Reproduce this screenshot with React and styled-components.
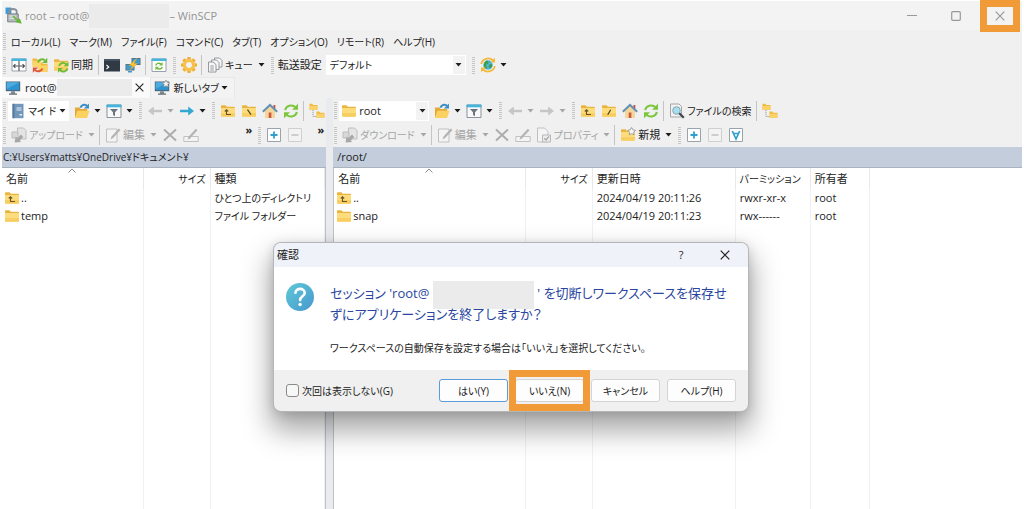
import React from "react";
import styled, { createGlobalStyle, css } from "styled-components";

const GlobalStyle = createGlobalStyle`
  *, *::before, *::after {
    box-sizing: border-box;
  }
  body {
    margin: 0;
    background: #fff;
  }
  body, button, select, input {
    font-family: "Open Sans", "Noto Sans CJK JP", sans-serif;
    font-size: 11px;
    line-height: 16px;
    font-feature-settings: "palt";
    color: #222;
  }
`;

/* ---------- window ---------- */

const Window = styled.div`
  display: flex;
  flex-direction: column;
  min-height: 100vh;
  padding: 1px 2px 0;
  overflow: hidden;
  position: relative;
`;

const TitleBar = styled.header`
  display: flex;
  align-items: center;
  height: 29px;
  padding-left: 3px;
  background: #f3f3f3;
  color: #949494;
`;

const TitleText = styled.h1`
  display: flex;
  align-items: center;
  flex: 1;
  margin: 0 0 0 3px;
  font-size: 11px;
  font-weight: 400;
`;

const Redacted = styled.span`
  display: inline-block;
  width: ${(p) => p.$width}px;
  height: ${(p) => p.$height}px;
  background: #ebebeb;
`;

const WindowButton = styled.button`
  position: relative;
  display: flex;
  align-items: center;
  justify-content: center;
  width: 44px;
  height: 29px;
  padding: 0;
  border: 0;
  background: none;
  color: #999;
`;

const Highlight = styled.span`
  position: absolute;
  inset: ${(p) => p.$inset};
  border: 7px solid #f09a38;
  pointer-events: none;
`;

const MenuBar = styled.nav`
  display: flex;
  align-items: center;
  gap: 9px;
  height: 23px;
  background: #f0f0f0;
`;

const MenuItem = styled.button`
  padding: 0;
  border: 0;
  background: none;
  font-size: 10px;
  white-space: nowrap;
`;

/* ---------- toolbars ---------- */

const Toolbar = styled.div`
  display: flex;
  align-items: center;
  height: ${(p) => p.$height || 24}px;
  background: #f0f0f0;
  white-space: nowrap;
`;

const Grip = styled.span`
  flex: none;
  width: 3px;
  height: 17px;
  margin: ${(p) => (p.$lead ? "0 2px 0 1px" : "0 2px 0 4px")};
  background: repeating-linear-gradient(#c6c6c6 0 1px, #f0f0f0 1px 2px);
  ${MenuBar} & {
    margin: 0 -4px 0 1px;
  }
`;

const Separator = styled.span`
  flex: none;
  width: 1px;
  height: 20px;
  margin: 0 2px;
  background: #c4c4c4;
`;

const ToolButton = styled.button`
  display: flex;
  align-items: center;
  flex: none;
  height: 22px;
  padding: 0 ${(p) => (p.$label ? 3 : 2)}px 0 3px;
  gap: 2px;
  border: 0;
  background: none;
  font-size: ${(p) => (p.$kana ? 10 : 11)}px;
  color: ${(p) => (p.disabled ? "#a5a5a5" : "#222")};
`;

const CaretButton = styled.button`
  display: flex;
  align-items: center;
  justify-content: center;
  flex: none;
  width: 11px;
  height: 22px;
  padding: 0;
  border: 0;
  background: none;
  color: ${(p) => (p.disabled ? "#a5a5a5" : "#1a1a1a")};
`;

const More = styled.button`
  align-self: flex-start;
  padding: 0 2px;
  border: 0;
  background: none;
  font-weight: 700;
  line-height: 14px;
`;

const Spacer = styled.span`
  flex: ${(p) => (p.$width ? `0 0 ${p.$width}px` : 1)};
`;

const Combo = styled.span`
  display: flex;
  align-items: center;
  flex: none;
  position: relative;
  width: ${(p) => p.$width}px;
  height: 20px;
  padding-left: 2px;
  margin-right: 2px;
  background: #fff;
`;

const ComboSelect = styled.select`
  appearance: none;
  flex: 1;
  min-width: 0;
  height: 20px;
  padding: 0 0 0 2px;
  border: 0;
  background: none;
  font-size: ${(p) => (p.$kana ? 10 : 11)}px;
`;

const ComboArrow = styled.span`
  display: flex;
  align-items: center;
  justify-content: center;
  width: 12px;
  height: 18px;
  margin-right: 1px;
  background: ${(p) => (p.$flat ? "#fff" : "#f3f3f3")};
  pointer-events: none;
`;

const FieldLabel = styled.label`
  padding: 0 4px 0 2px;
`;

/* ---------- session tabs ---------- */

const Tabs = styled.div`
  display: flex;
  height: 21px;
  background: #f0f0f0;
`;

const Tab = styled.div`
  display: flex;
  align-items: center;
  padding: 0 4px 0 3px;
  ${(p) =>
    p.$active
      ? css`
          background: #fafafa;
        `
      : css`
          background: #f3f3f3;
          border: 1px solid #e8e8e8;
          border-bottom: 0;
        `}
`;

const TabButton = styled.button`
  display: flex;
  align-items: center;
  gap: 4px;
  padding: 0;
  border: 0;
  background: none;
  font-size: ${(p) => (p.$kana ? 10 : 11)}px;
  white-space: nowrap;
`;

const TabClose = styled(TabButton)`
  margin: 0 2px 0 3px;
`;

/* ---------- panes ---------- */

const Panes = styled.main`
  display: grid;
  grid-template-columns: minmax(0, 32fr) minmax(0, 68fr);
  column-gap: 7px;
  flex: 1;
  background: #e9ebee;
`;

const Pane = styled.section`
  display: flex;
  flex-direction: column;
`;

const PathBar = styled.div`
  height: 21px;
  padding: 1px ${(p) => p.$indent}px;
  border-bottom: 1px solid #a9b3c0;
  background: #c3cddc;
  font-size: ${(p) => (p.$kana ? 10 : 11)}px;
  line-height: 18px;
`;

const Listing = styled.div`
  display: flex;
  flex: 1;
  border: solid #bfc3c9;
  border-width: ${(p) => (p.$remote ? "0 0 0 1px" : "0 1px 0 0")};
  background: #fff;
`;

const FileTable = styled.table`
  width: 100%;
  table-layout: fixed;
  border-collapse: collapse;
  white-space: nowrap;
`;

const Col = styled.col`
  width: ${(p) => p.$width}px;
`;

const Th = styled.th`
  position: relative;
  height: 21px;
  padding: 0 4px;
  border-right: 1px solid #e8e8e8;
  font-size: ${(p) => (p.$kana ? 10 : 11)}px;
  font-weight: 400;
  text-align: ${(p) => (p.$right ? "right" : "left")};
  &:last-child {
    border-right: 0;
  }
`;

const Td = styled.td`
  height: 18px;
  padding: 0 4px;
  border-right: 1px solid #eef2f8;
  font-size: ${(p) => (p.$kana ? 10 : 11)}px;
  &:first-child {
    padding-left: 2px;
  }
  &:last-child {
    border-right: 0;
  }
`;

const FillRow = styled.tr`
  height: 100%;
`;

const FileName = styled.span`
  display: flex;
  align-items: center;
  gap: 1px;
`;

const SortMark = styled.svg`
  position: absolute;
  top: 0;
  left: 50%;
  transform: translateX(-50%);
`;

/* ---------- dialog ---------- */

const Dialog = styled.section`
  position: absolute;
  top: 243px;
  left: 50%;
  width: 474px;
  margin-left: -238px;
  border-radius: 7px;
  background: #f0f0f0;
  box-shadow: 0 0 0 1px #b4b6ba, 0 16px 28px 4px rgba(0, 0, 0, 0.34),
    0 2px 12px rgba(0, 0, 0, 0.16);
`;

const DialogTitle = styled.header`
  display: flex;
  align-items: center;
  height: 24px;
  padding: 0 8px 0 3px;
  border-radius: 7px 7px 0 0;
  background: #eff2f8;
`;

const DialogName = styled.h2`
  flex: 1;
  margin: 0;
  font-size: 11px;
  font-weight: 400;
`;

const DialogTool = styled.button`
  display: flex;
  align-items: center;
  justify-content: center;
  width: 30px;
  height: 24px;
  margin-left: 14px;
  padding: 0;
  border: 0;
  background: none;
`;

const DialogBody = styled.div`
  display: flex;
  gap: 16px;
  padding: 16px 12px 14px;
  background: #fff;
`;

const Question = styled.p`
  margin: 0 0 15px;
  font-size: 13px;
  line-height: 21px;
  color: #2a46a0;
  ${Redacted} {
    margin: -6px 3px -6px 4px;
    vertical-align: middle;
  }
`;

const Hint = styled.p`
  margin: 0;
  font-size: 10px;
`;

const DialogFooter = styled.footer`
  display: flex;
  align-items: center;
  gap: 7px;
  height: 41px;
  padding: 0 12px;
`;

const CheckLabel = styled.label`
  display: flex;
  align-items: center;
  gap: 3px;
  margin-right: auto;
  font-size: 10px;
  white-space: nowrap;
`;

const CheckBox = styled.input`
  appearance: none;
  flex: none;
  width: 13px;
  height: 13px;
  margin: 0;
  border: 1px solid #8a8a8a;
  border-radius: 3px;
  background: #f7f7f7;
`;

const DialogButton = styled.button`
  position: relative;
  width: 69px;
  height: 23px;
  padding: 0;
  border: 1px solid ${(p) => (p.$primary ? "#5a9bd8" : "#d4d4d4")};
  border-radius: 3px;
  background: #fdfdfd;
  font-size: 10px;
  white-space: nowrap;
`;

/* ---------- icons ---------- */

const Svg = ({ children, size = 16, ...rest }) => (
  <svg width={size} height={size} viewBox="0 0 16 16" fill="none" aria-hidden="true" {...rest}>
    {children}
  </svg>
);

const Caret = () => (
  <svg width="7" height="4" viewBox="0 0 7 4" aria-hidden="true">
    <path d="M0.5 0h6L3.5 3.6z" fill="currentColor" />
  </svg>
);

const CloseGlyph = ({ size = 10 }) => (
  <svg width={size} height={size} viewBox="0 0 10 10" aria-hidden="true">
    <path d="M0.7 0.7l8.6 8.6M9.3 0.7L0.7 9.3" stroke="currentColor" strokeWidth="1.2" />
  </svg>
);

const folderShape = (
  <>
    <path d="M1 3.2c0-.6.3-.9.9-.9h3.6l1.4 1.5H14c.6 0 1 .3 1 .9v3H1z" fill="#eab53f" />
    <path d="M1 5h14v7.8c0 .6-.4.9-1 .9H2c-.6 0-1-.3-1-.9z" fill="#fcdc7c" />
    <path d="M1 10h14v2.8c0 .6-.4.9-1 .9H2c-.6 0-1-.3-1-.9z" fill="#f7ce62" />
  </>
);

const FolderIcon = () => <Svg>{folderShape}</Svg>;

const FolderUpIcon = () => (
  <Svg>
    {folderShape}
    <path d="M6.500 12V7M4.800 8.500l1.700-1.800 1.700 1.800M6.500 11.500H11" stroke="#6b5526" strokeWidth="1.100" />
  </Svg>
);

const FolderSlashIcon = ({ back }) => (
  <Svg>
    {folderShape}
    <path d={back ? "M6.5 6.7l3.5 5" : "M9.7 6.7l-3 5"} stroke="#54411c" strokeWidth="1.2" />
  </Svg>
);

const FolderOpenIcon = () => (
  <Svg>
    <path d="M1 4.5h4.3l1.3 1.4h6.6V14H1z" fill="#e5a936" />
    <path d="M3.4 7.8h12.1L13 15H1z" fill="#fbd160" />
    <path d="M6.500 4.800c.8-3 4-4 6.500-2" stroke="#3d8fc8" strokeWidth="2" />
    <path d="M15 .4v5.200H9.800z" fill="#3d8fc8" />
  </Svg>
);

const NewFolderIcon = () => (
  <Svg>
    {folderShape}
    <path
      d="M11.600 .5l1.300 2.300 2.600.5-1.800 1.900.3 2.600-2.400-1.100-2.400 1.100.3-2.600L7.700 3.300l2.600-.5z"
      fill="#f6f6f6"
      stroke="#8d8d8d"
      strokeWidth=".8"
    />
  </Svg>
);

const TreeIcon = () => (
  <Svg>
    <path d="M4 7v6.500h4" stroke="#9a9a9a" strokeDasharray="1.200 .8" />
    <path d="M.5 .8h2.800l.9 1.100h4.300v5.100H.5z" fill="#f2b93f" />
    <path d="M.5 3h8v4h-8z" fill="#f9d26c" />
    <path d="M7.500 8.600h2.800l.9 1.100h4.300v5.100h-8z" fill="#f2b93f" />
    <path d="M7.500 10.800h8v4h-8z" fill="#f9d26c" />
  </Svg>
);

const FilterIcon = () => (
  <Svg>
    <path d="M1 2h14v12.500H1z" fill="#f7f9fa" stroke="#8b9299" />
    <path d="M.5 1.500h15V4.300H.5z" fill="#45b5dc" />
    <path d="M4 6h8L9 9.300v4l-2-1.300V9.300z" fill="#6d747b" />
  </Svg>
);

const ArrowIcon = ({ left, color = "#c5c5c5" }) => (
  <Svg>
    <path
      d="M1 6.700h8.200V3.600L15 8l-5.800 4.400V9.300H1z"
      fill={color}
      transform={left ? "matrix(-1 0 0 1 16 0)" : undefined}
    />
  </Svg>
);

const HomeIcon = () => (
  <Svg>
    <path d="M3 7.500L8 3l5 4.500V15H3z" fill="#f3d79a" />
    <path d="M6.700 9.500h2.700V15H6.700z" fill="#d0573f" />
    <path d="M11.500 2h1.800v4h-1.800z" fill="#c9493a" />
    <path d="M.8 8.800L8 2l7.200 6.800" stroke="#6590b5" strokeWidth="2" />
  </Svg>
);

const RefreshIcon = ({ color = "#7cc63d" }) => (
  <Svg>
    <path d="M2.200 7.200C2.800 2.600 9 .8 12.600 4.200M13.800 8.800c-.6 4.600-6.800 6.400-10.400 3" stroke={color} strokeWidth="2" />
    <path d="M15 .8v5.900H9zM1 15.200V9.300H7z" fill={color} />
  </Svg>
);

const SyncBrowseIcon = () => (
  <Svg>
    <path d="M1 2h14v12H1z" fill="#fff" stroke="#9aa1a8" />
    <path d="M.5 1.500h15v2.500H.5z" fill="#45b5dc" />
    <path
      d="M8 4v10M2.500 9h4.800M8.700 9h4.800M4.400 7.100L2.500 9l1.900 1.900M11.600 7.100l1.900 1.900-1.900 1.900"
      stroke="#4b4f54"
      strokeWidth="1.100"
    />
  </Svg>
);

const FolderSyncIcon = () => (
  <Svg>
    {folderShape}
    <path d="M6 9c1-3.500 5-4 7.500-1.500" stroke="#6dbb38" strokeWidth="1.800" />
    <path d="M15.500 4.500v4.800h-4.800z" fill="#6dbb38" />
    <path d="M14.500 11.500c-1 3.500-5 4-7.500 1.500" stroke="#6dbb38" strokeWidth="1.800" />
    <path d="M5 15.800V11h4.800z" fill="#6dbb38" />
  </Svg>
);

const CompareIcon = () => (
  <Svg>
    <path d="M.5 1.500h4l1 1.300H9V8H.5z" fill="#f2b93f" />
    <path d="M6 5.500h4l1 1.300h4.500v8H6z" fill="#f2b93f" />
    <path d="M.5 4H9v6H.5zM6 8.500h9.500v6.300H6z" fill="#fbd568" />
    <path d="M6 5.500C7 2 10.500 1.500 12.800 3.300" stroke="#6dbb38" strokeWidth="2" />
    <path d="M15.300 .7v5.200h-5.200z" fill="#6dbb38" />
    <path d="M10.500 11.500c-1.200 3-4.800 3.500-7.200 1.700" stroke="#e2553b" strokeWidth="2" />
    <path d="M.8 15.800v-5.400h5.400z" fill="#e2553b" />
  </Svg>
);

const TerminalIcon = () => (
  <Svg>
    <path d="M0 2h16v12.500H0z" fill="#2f3a44" />
    <path d="M0 2h16v2H0z" fill="#47535f" />
    <path d="M2.500 8l2.200 2-2.200 2" stroke="#fff" strokeWidth="1.100" />
  </Svg>
);

const monitorShape = (
  <>
    <path d="M.8 1.500h14.400v9.700H.8z" fill="#4f5b66" />
    <path d="M1.600 2.300h12.800v8H1.600z" fill="#2f93cf" />
    <path d="M1.600 2.300h12.800L1.600 9z" fill="#4cacdf" />
    <path d="M6.300 11.200h3.400l.6 2.600H5.700z" fill="#7c868f" />
    <path d="M4 13.500h8v1.200H4z" fill="#59636c" />
  </>
);

const MonitorIcon = () => <Svg>{monitorShape}</Svg>;

const NewTabIcon = () => (
  <Svg>
    {monitorShape}
    <path
      d="M12 0l1.200 2.300 2.500.4-1.800 1.800.4 2.500L12 5.900 9.700 7l.4-2.500L8.300 2.700l2.500-.4z"
      fill="#f2f2f2"
      stroke="#858585"
      strokeWidth=".7"
    />
  </Svg>
);

const PuttyIcon = () => (
  <Svg>
    <path d="M6.500 1h9v7h-9z" fill="#5b6b78" />
    <path d="M7.300 1.800h7.400v5.400H7.300z" fill="#3d9bd4" />
    <path d="M.5 7h9v6.500h-9z" fill="#5b6b78" />
    <path d="M1.300 7.800h7.400v4.900H1.300zM3 14h4v1.500H3z" fill="#3d9bd4" />
    <path d="M12 1L4 8.500h3.500L5 13l7.500-6.500H9z" fill="#fbc52d" stroke="#d99a1c" strokeWidth=".4" />
  </Svg>
);

const RefreshPanelIcon = () => (
  <Svg>
    <path d="M1 2h14v12.500H1z" fill="#fff" stroke="#9aa1a8" />
    <path d="M.5 1.500h15v2.500H.5z" fill="#45b5dc" />
    <path
      d="M4.700 8.500c.5-2.300 3.500-3 5.500-1.300M11.300 9.800c-.5 2.300-3.500 3-5.500 1.300"
      stroke="#6dbb38"
      strokeWidth="1.400"
    />
    <path d="M11.600 5v3.500H8.100zM4.400 13.300V9.800h3.500z" fill="#6dbb38" />
  </Svg>
);

const GearIcon = () => (
  <Svg>
    <g fill="#efb036">
      {[0, 45, 90, 135].map((deg) => (
        <rect key={deg} x="6.200" y="0" width="3.600" height="16" rx="1" transform={`rotate(${deg} 8 8)`} />
      ))}
    </g>
    <circle cx="8" cy="8" r="4.600" stroke="#f7c14b" strokeWidth="3" />
    <circle cx="8" cy="8" r="3" fill="#f2f2f2" />
  </Svg>
);

const QueueIcon = () => (
  <Svg stroke="#8a8f94" fill="#f7f7f7" strokeWidth=".9">
    <path d="M7.500 1h5l2.500 2.500V10H7.500z" />
    <path d="M4.500 3h5L12 5.500V12.500H4.500z" />
    <path d="M1.500 5h4.500L9 7.500v7.500H1.500z" />
    <path d="M3.300 9h3.500M3.300 11h3.500M3.300 13h3.500" />
  </Svg>
);

const GlobeIcon = () => (
  <Svg>
    <circle cx="8" cy="8" r="4.700" fill="#4bb4dc" />
    <path
      d="M5 5c2-2 3-1 3.500 0s-1 2-2 2.500-.5 2 .5 2.500-1 2-1.500 1.500C3 10 3.500 7 5 5zM9.500 7.500c1.500-1 3-.5 2.800 1S10.500 12 9.500 11s-1-2.500 0-3.500z"
      fill="#3f9f46"
    />
    <path
      d="M1.300 7C2 2 9 -.5 13 3.500M14.700 9c-.7 5-7.700 7.500-11.700 3.500"
      stroke="#f2b93b"
      strokeWidth="1.800"
    />
    <path d="M15 .8v4.700h-4.700zM1 15.200v-4.700h4.700z" fill="#f2b93b" />
  </Svg>
);

const DocumentsIcon = () => (
  <Svg>
    <path d="M2.500 .8h11v14.400h-11z" fill="#7397bb" />
    <path d="M2.500 .8h2v14.400h-2z" fill="#557ba2" />
    <path d="M6.500 5h5M6.500 7h5" stroke="#e6eef6" />
    <path d="M9.500 11h2.500v1.500H9.500z" fill="#e6eef6" />
  </Svg>
);

const TransferIcon = () => (
  <Svg>
    <path d="M6.500 1h6l2.500 2.500V12H6.500z" fill="#e4e4e4" stroke="#bdbdbd" />
    <path d="M1 5h6v6H1z" fill="#d8d8d8" stroke="#bdbdbd" />
    <path d="M3.500 15.500l1.200-6 1.700 1.700L10 7.600l2.300 2.300-3.600 3.600 1.500 1.500z" fill="#a8a8a8" />
  </Svg>
);

const EditIcon = () => (
  <Svg>
    <path d="M1.500 2h10.500v13H1.500z" fill="#f4f4f4" stroke="#c0c0c0" />
    <path d="M5.500 12.500l1-3 7.300-8 1.700 1.500-7.300 8z" fill="#b4b4b4" />
  </Svg>
);

const RenameIcon = () => (
  <Svg>
    <path d="M.8 9.500h14.400v5H.8z" fill="#f4f4f4" stroke="#c0c0c0" />
    <path d="M4.500 12.700l1-3 7.300-8 1.700 1.500-7.300 8z" fill="#b4b4b4" />
  </Svg>
);

const DeleteIcon = () => (
  <Svg>
    <path d="M2 2.500l12 11M14 2.500l-12 11" stroke="#adadad" strokeWidth="2" />
  </Svg>
);

const PropertiesIcon = () => (
  <Svg>
    <path d="M1.500 1h7l3.500 3.500V15H1.500z" fill="#f4f4f4" stroke="#c0c0c0" />
    <path d="M6.500 8h8v7h-8z" fill="#ececec" stroke="#b8b8b8" />
    <path d="M8.300 11.300l1.700 1.700 3-3.600" stroke="#a8a8a8" strokeWidth="1.300" />
  </Svg>
);

const BoxIcon = ({ kind }) => (
  <Svg>
    <path
      d="M1.500 1.500h13v13h-13z"
      fill={kind === "minus" ? "#f3f3f3" : "#fff"}
      stroke={kind === "minus" ? "#cfcfcf" : "#9aa3ab"}
    />
    {kind === "plus" && <path d="M8 4.500v7M4.500 8h7" stroke="#2f9fd0" strokeWidth="1.800" />}
    {kind === "minus" && <path d="M4.500 8h7" stroke="#bdbdbd" strokeWidth="1.400" />}
    {kind === "select" && <path d="M4.300 4l3.700 8 3.700-8M5.500 6.500h5" stroke="#2f9fd0" strokeWidth="1.700" />}
  </Svg>
);

const FindIcon = () => (
  <Svg>
    <path d="M1.500 1h8.500l2.500 2.500V14H1.500z" fill="#f2f2f2" stroke="#a5a5a5" />
    <circle cx="7.500" cy="7.500" r="3.800" fill="#a5dff0" stroke="#8aa5b0" />
    <path d="M10.300 10.300l4.500 4.500" stroke="#3e464c" strokeWidth="2.200" />
  </Svg>
);

const AppIcon = () => (
  <Svg size={17}>
    <path d="M.5.500h5.500v6H.5z" fill="#3b9bd8" />
    <path d="M4 7V4.500C4 1 11 1 11 4.500V7" stroke="#8a9096" strokeWidth="1.700" />
    <path d="M2.500 6.500h10V14h-10z" fill="#b5babf" stroke="#70767c" strokeWidth=".8" />
    <path d="M4 8.500h6M4 10.500h6" stroke="#e8eaec" />
    <path d="M8 8l4.300 4.200L14 10.500l1.700 5.300-5.400-1.500 1-1L7 9z" fill="#63b832" />
  </Svg>
);

const QuestionIcon = () => (
  <svg width="28" height="28" viewBox="0 0 28 28" aria-hidden="true">
    <defs>
      <linearGradient id="ask" x1="0" y1="0" x2="1" y2="1">
        <stop offset="0" stopColor="#5fc9d6" />
        <stop offset="1" stopColor="#4797cf" />
      </linearGradient>
    </defs>
    <circle cx="14" cy="14" r="14" fill="url(#ask)" />
    <path
      d="M9.500 9.800c.2-5.200 9.200-5.200 9.200.1 0 3.500-4.600 3.400-4.600 7.200"
      fill="none"
      stroke="#fff"
      strokeWidth="2.600"
      strokeLinecap="round"
    />
    <circle cx="14.100" cy="21.500" r="1.700" fill="#fff" />
  </svg>
);

/* ---------- parts ---------- */

const Tool = ({ icon, label, kana, disabled, name }) => (
  <ToolButton
    type="button"
    disabled={disabled}
    $label={!!label}
    $kana={kana}
    aria-label={label ? undefined : name}
  >
    {icon}
    {label}
  </ToolButton>
);

const Split = ({ disabled, name, ...rest }) => (
  <>
    <Tool disabled={disabled} name={name} {...rest} />
    <CaretButton type="button" disabled={disabled} aria-label={name}>
      <Caret />
    </CaretButton>
  </>
);

const Dropdown = ({ id, name, icon, width, value, flat, kana }) => (
  <Combo $width={width}>
    {icon}
    <ComboSelect id={id} aria-label={name} defaultValue={value} $kana={kana}>
      <option>{value}</option>
    </ComboSelect>
    <ComboArrow $flat={flat}>
      <Caret />
    </ComboArrow>
  </Combo>
);

const NavigationBar = ({ remote }) => (
  <Toolbar $height={25}>
    <Grip $lead />
    {remote ? (
      <Dropdown name="Remote folder" icon={<FolderIcon />} width={90} value="root" />
    ) : (
      <Dropdown name="Local folder" icon={<DocumentsIcon />} width={61} value="マイ ド" flat kana />
    )}
    <Split icon={<FolderOpenIcon />} name="Open" />
    <Split icon={<FilterIcon />} name="Filter" />
    <Grip />
    <Split icon={<ArrowIcon left />} name="Back" disabled />
    <Split icon={<ArrowIcon color={remote ? undefined : "#35a7d3"} />} name="Forward" disabled={remote} />
    <Grip />
    <Tool icon={<FolderUpIcon />} name="Parent" />
    <Tool icon={<FolderSlashIcon back={!remote} />} name="Root" />
    <Tool icon={<HomeIcon />} name="Home" />
    <Tool icon={<RefreshIcon />} name="Refresh" />
    <Separator />
    {remote && (
      <>
        <Tool icon={<FindIcon />} label="ファイルの検索" kana />
        <Separator />
      </>
    )}
    <Tool icon={<TreeIcon />} name="Tree" />
  </Toolbar>
);

const ActionBar = ({ remote }) => (
  <Toolbar $height={24}>
    <Grip $lead />
    <Split
      icon={<TransferIcon />}
      label={remote ? "ダウンロード" : "アップロード"}
      name="Transfer"
      kana
      disabled
    />
    <Separator />
    <Split icon={<EditIcon />} label="編集" name="Edit" disabled />
    <Tool icon={<DeleteIcon />} name="Delete" disabled />
    <Tool icon={<RenameIcon />} name="Rename" disabled />
    {remote ? (
      <>
        <Split icon={<PropertiesIcon />} label="プロパティ" name="Properties" kana disabled />
        <Separator />
        <Split icon={<NewFolderIcon />} label="新規" name="New" />
      </>
    ) : (
      <>
        <Spacer />
        <More type="button">»</More>
      </>
    )}
    <Grip />
    <Tool icon={<BoxIcon kind="plus" />} name="Select" />
    <Tool icon={<BoxIcon kind="minus" />} name="Unselect" disabled />
    {remote ? (
      <Tool icon={<BoxIcon kind="select" />} name="Select all" />
    ) : (
      <>
        <Spacer $width={10} />
        <More type="button">»</More>
      </>
    )}
  </Toolbar>
);

const FileList = ({ columns, rows, remote }) => (
  <Listing $remote={remote}>
    <FileTable>
      <colgroup>
        {columns.map((col) => (
          <Col key={col.title} $width={col.width} />
        ))}
        <col />
      </colgroup>
      <thead>
        <tr>
          {columns.map((col, idx) => (
            <Th key={col.title} $right={col.right} $kana={col.kana}>
              {idx === 0 && (
                <SortMark width="8" height="5" viewBox="0 0 8 5" fill="none" stroke="#8a8a8a">
                  <path d="M.5 4.500L4 1l3.500 3.500" />
                </SortMark>
              )}
              {col.title}
            </Th>
          ))}
          <Th as="td" />
        </tr>
      </thead>
      <tbody>
        {rows.map((row) => (
          <tr key={row[0]}>
            {row.map((cell, idx) => (
              <Td key={idx} $kana={columns[idx].kanaCells}>
                {idx === 0 ? (
                  <FileName>
                    {cell === ".." ? <FolderUpIcon /> : <FolderIcon />}
                    {cell}
                  </FileName>
                ) : (
                  cell
                )}
              </Td>
            ))}
            <Td />
          </tr>
        ))}
        <FillRow>
          {columns.map((col) => (
            <Td key={col.title} />
          ))}
          <Td />
        </FillRow>
      </tbody>
    </FileTable>
  </Listing>
);

const menus = [
  "ローカル(L)",
  "マーク(M)",
  "ファイル(F)",
  "コマンド(C)",
  "タブ(T)",
  "オプション(O)",
  "リモート(R)",
  "ヘルプ(H)",
];

const localColumns = [
  { title: "名前", width: 141 },
  { title: "サイズ", width: 67, right: true, kana: true },
  { title: "種類", width: 114, kanaCells: true },
];

const localRows = [
  ["..", "", "ひとつ上のディレクトリ"],
  ["temp", "", "ファイル フォルダー"],
];

const remoteColumns = [
  { title: "名前", width: 191 },
  { title: "サイズ", width: 67, right: true, kana: true },
  { title: "更新日時", width: 143 },
  { title: "パーミッション", width: 75, kana: true },
  { title: "所有者", width: 59 },
];

const remoteRows = [
  ["..", "", "2024/04/19 20:11:26", "rwxr-xr-x", "root"],
  ["snap", "", "2024/04/19 20:11:23", "rwx------", "root"],
];

function ConfirmDialog() {
  return (
    <Dialog role="dialog" aria-labelledby="confirm-title">
      <DialogTitle>
        <DialogName id="confirm-title">確認</DialogName>
        <DialogTool type="button">?</DialogTool>
        <DialogTool type="button" aria-label="Close">
          <CloseGlyph />
        </DialogTool>
      </DialogTitle>
      <DialogBody>
        <QuestionIcon />
        <div>
          <Question>
            セッション 'root@
            <Redacted $width={101} $height={28} />
            ' を切断しワークスペースを保存せ
            <br />
            ずにアプリケーションを終了しますか？
          </Question>
          <Hint>ワークスペースの自動保存を設定する場合は「いいえ」を選択してください。</Hint>
        </div>
      </DialogBody>
      <DialogFooter>
        <CheckLabel>
          <CheckBox type="checkbox" />
          次回は表示しない(G)
        </CheckLabel>
        <DialogButton type="button" $primary>
          はい(Y)
        </DialogButton>
        <DialogButton type="button">
          いいえ(N)
          <Highlight $inset="-10px -7px" />
        </DialogButton>
        <DialogButton type="button">キャンセル</DialogButton>
        <DialogButton type="button">ヘルプ(H)</DialogButton>
      </DialogFooter>
    </Dialog>
  );
}

function App() {
  return (
    <>
      <GlobalStyle />
      <Window>
        <TitleBar>
          <AppIcon />
          <TitleText>
            root – root@
            <Redacted $width={80} $height={24} />
            – WinSCP
          </TitleText>
          <WindowButton type="button" aria-label="Minimize">
            <svg width="10" height="10" viewBox="0 0 10 10">
              <path d="M0 4.500h10" stroke="currentColor" />
            </svg>
          </WindowButton>
          <WindowButton type="button" aria-label="Maximize">
            <svg width="10" height="10" viewBox="0 0 10 10">
              <rect
                x=".7"
                y=".7"
                width="8.600"
                height="8.600"
                rx="1"
                fill="none"
                stroke="currentColor"
                strokeWidth="1.200"
              />
            </svg>
          </WindowButton>
          <WindowButton type="button" aria-label="Close">
            <CloseGlyph />
            <Highlight $inset="-1px 2px -2px" />
          </WindowButton>
        </TitleBar>

        <MenuBar>
          <Grip $lead />
          {menus.map((menu) => (
            <MenuItem type="button" key={menu}>
              {menu}
            </MenuItem>
          ))}
        </MenuBar>

        <Toolbar>
          <Grip $lead />
          <Tool icon={<SyncBrowseIcon />} name="Synchronize browsing" />
          <Tool icon={<CompareIcon />} name="Compare" />
          <Tool icon={<FolderSyncIcon />} label="同期" />
          <Separator />
          <Tool icon={<TerminalIcon />} name="Terminal" />
          <Tool icon={<PuttyIcon />} name="PuTTY" />
          <Separator />
          <Tool icon={<RefreshPanelIcon />} name="Refresh" />
          <Grip />
          <Tool icon={<GearIcon />} name="Preferences" />
          <Separator />
          <Split icon={<QueueIcon />} label="キュー" name="Queue" kana />
          <Grip />
          <FieldLabel htmlFor="transfer-preset">転送設定</FieldLabel>
          <Dropdown id="transfer-preset" width={140} value="デフォルト" kana />
          <Grip />
          <Split icon={<GlobeIcon />} name="Updates" />
        </Toolbar>

        <Tabs>
          <Tab $active>
            <TabButton type="button">
              <MonitorIcon />
              <span>root@</span>
            </TabButton>
            <Redacted $width={75} $height={17} />
            <TabClose type="button" aria-label="Close tab">
              <CloseGlyph size={9} />
            </TabClose>
          </Tab>
          <Tab>
            <TabButton type="button" $kana>
              <NewTabIcon />
              新しいタブ
            </TabButton>
            <CaretButton type="button" aria-label="Tab menu">
              <Caret />
            </CaretButton>
          </Tab>
        </Tabs>

        <Panes>
          <Pane>
            <NavigationBar />
            <ActionBar />
            <PathBar $indent={1} $kana>
              C:¥Users¥matts¥OneDrive¥ドキュメント¥
            </PathBar>
            <FileList columns={localColumns} rows={localRows} />
          </Pane>
          <Pane>
            <NavigationBar remote />
            <ActionBar remote />
            <PathBar $indent={4}>/root/</PathBar>
            <FileList columns={remoteColumns} rows={remoteRows} remote />
          </Pane>
        </Panes>

        <ConfirmDialog />
      </Window>
    </>
  );
}

export default App;
